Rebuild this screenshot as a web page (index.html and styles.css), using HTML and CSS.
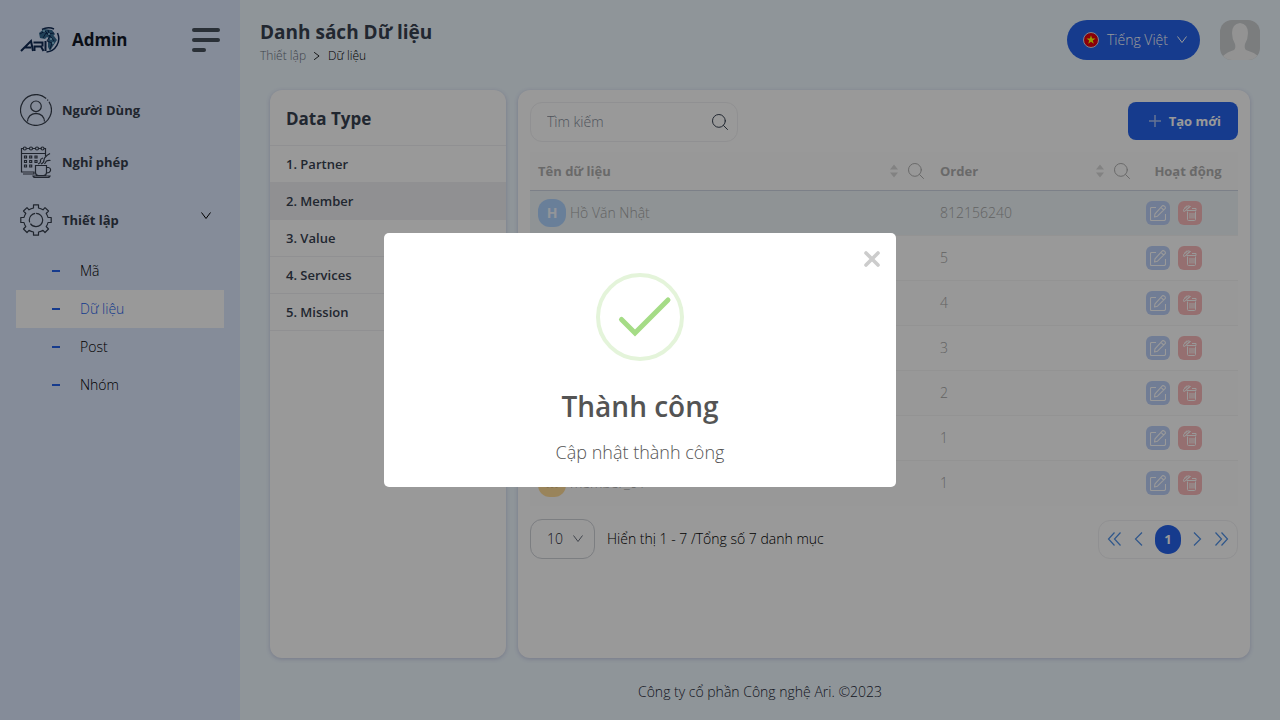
FILE: index.html
```html
<!DOCTYPE html>
<html lang="vi">
<head>
<meta charset="utf-8">
<meta name="viewport" content="width=device-width, initial-scale=1">
<title>Danh sách Dữ liệu</title>
<link rel="stylesheet" href="styles.css">
</head>
<body>
<svg class="defs" aria-hidden="true">
  <symbol id="search" viewBox="0 0 16 16"><g fill="none" stroke="currentColor" stroke-linecap="round"><circle cx="6.9" cy="6.900" r="6.400"/><path d="M11.500 11.500l4 4"/></g></symbol>
  <symbol id="chevron" viewBox="0 0 12 12"><path d="M1.500 2.500L6 8.500l4.500-6" fill="none" stroke="currentColor"/></symbol>
  <symbol id="sort" viewBox="0 0 8 14"><path d="M4 .5L8 5.500H0zM4 13.500L8 8.500H0z" fill="currentColor"/></symbol>
  <symbol id="edit" viewBox="0 0 16 16"><g fill="none" stroke="currentColor" stroke-width="1.100" stroke-linejoin="round"><path d="M6 2.500H1.500Q.5 2.500.5 3.500V14.500Q.5 15.500 1.500 15.500H14Q15.500 15.500 15.500 14V9"/><path d="M12.300.8Q13.500.2 14.700 1.300T15.100 3.700L7.500 11.200 4.500 12 5 8.800zM11 2.300l2.700 2.700"/></g></symbol>
  <symbol id="trash" viewBox="0 0 14 16"><g fill="none" stroke="currentColor" stroke-linejoin="round"><path d="M4.500 6.500v8q0 1 1 1h6q1 0 1-1v-8M3.500 5.500h9.500V3.500H9M7 8v5.500M9 8v5.500M11 8v5.500"/><path d="M.8 6.500L.6 4.500 5 .8 7.500 1.500 1.700 6.300zM1 3.500L4 .8M3 4.700L6.500 1.500"/></g></symbol>
</svg>

<div class="layout">
  <aside class="sidebar">
    <div class="brand">
      <svg class="logo" viewBox="0 0 40 28" aria-hidden="true">
        <g fill="none" stroke="#102a54"><path d="M1 25L11 15 13 25M5 21.500h6" stroke-width="2"/><path d="M14.500 25v-4.500h6.500l2.500 4.500M13.500 16.500h9v4M25.500 15v10" stroke-width="2"/><path d="M22 3.500A13 12 0 0 1 34 3M37.500 7a13.500 13.500 0 0 1-11 19" stroke-width="1.500"/></g>
        <g fill="#35698f"><path d="M19 7l5-4 8 1 3 4-4 5-4-2-2 2-5-1zM28 12l6-2 3 4-4 6-3 5-2-4z"/></g>
        <g fill="none" stroke="#102a54" stroke-width="1"><path d="M20 8l5-3 3 3 6-1M23 12l3-5 5 4 3 4M28 4l2 6-3 5 5 2-2 6"/></g>
        <g fill="#9bd5ed"><circle cx="24" cy="5" r="1"/><circle cx="29" cy="8" r="1"/><circle cx="31" cy="13" r="1"/><circle cx="33" cy="17" r="1"/></g>
      </svg>
      <span class="brand-name">Admin</span>
      <button class="burger" type="button" aria-label="Menu"><i></i><i></i><i></i></button>
    </div>
    <nav class="menu">
      <a class="menu-item" href="#">
        <svg viewBox="0 0 32 32" aria-hidden="true"><g fill="none" stroke="currentColor" stroke-width="1.200"><path d="M29 7.800A15.400 15.400 0 1 1 26.200 4.500M27.300 5.700l.8.8"/><circle cx="16" cy="12.300" r="5.300"/><path d="M7.500 27.500q.5-7.500 8.500-8.200 8 .7 8.500 8.200"/></g></svg>
        Người Dùng</a>
      <a class="menu-item" href="#">
        <svg viewBox="0 0 32 32" aria-hidden="true"><g fill="none" stroke="currentColor" stroke-width="1.200"><path d="M3 2.500H1.500V26h13M25.500 10V2.500H24M1.500 7.500h24M6.500 2.500h3M12.500 2.500h3M18.500 2.500h3M3 28h11v-2"/><circle cx="4.800" cy="2.500" r="1.500"/><circle cx="11" cy="2.500" r="1.500"/><circle cx="17" cy="2.500" r="1.500"/><circle cx="22.500" cy="2.500" r="1.500"/><path d="M4.500 10h2v2h-2zM9.700 10h2v2h-2zM15 10h2v2h-2zM4.500 14.500h2v2h-2zM9.700 14.500h2v2h-2zM15 14.500h2v2h-2zM4.500 19h2v2h-2zM9.700 19h2v2h-2z"/><path d="M15.500 19.500h11v7q0 3-3 3h-5q-3 0-3-3zM26.500 21.500h2q2.500.5 2 3t-4 2.500M13 30h17q-.5 1.500-2 1.500H15Q13.500 31.500 13 30zM18 18q3-1 2.500-3t2.500-3M21 18q3-1 3-4t6-6.500M24.500 18l2-3q2-1 4-.500"/></g></svg>
        Nghỉ phép</a>
      <button class="menu-item menu-parent" type="button" aria-expanded="true">
        <svg viewBox="0 0 32 32" aria-hidden="true"><g fill="none" stroke="currentColor" stroke-width="1.200" stroke-linejoin="round"><path d="M13.500.8h5v3.200q2.500.5 4.500 1.800L25 3.600 28.500 7 26.200 9.500q1.400 2 1.800 4h3.200v5H28q-.4 2-1.800 4l2.300 2.500-3.500 3.500-2-2.200q-2 1.300-4.500 1.700v3.200h-5V28q-2.500-.4-4.500-1.700l-2 2.200L3.500 25l2.300-2.500q-1.400-2-1.800-4H.8v-5H4q.4-2 1.800-4L3.500 7 7 3.600l2 2.200q2-1.300 4.500-1.800z"/><circle cx="16" cy="16" r="6.700" stroke-dasharray="17 1.500 12 1"/></g></svg>
        <span>Thiết lập</span>
        <svg class="menu-arrow" aria-hidden="true"><use href="#chevron"/></svg>
      </button>
      <ul class="submenu">
        <li><a href="#">Mã</a></li>
        <li><a class="active" href="#">Dữ liệu</a></li>
        <li><a href="#">Post</a></li>
        <li><a href="#">Nhóm</a></li>
      </ul>
    </nav>
  </aside>

  <div class="page">
    <header class="topbar">
      <div class="heading">
        <h1>Danh sách Dữ liệu</h1>
        <nav class="crumbs"><a href="#">Thiết lập</a><svg aria-hidden="true"><use href="#chevron"/></svg><span>Dữ liệu</span></nav>
      </div>
      <div class="topbar-tools">
        <button class="language" type="button">
          <svg class="flag" viewBox="0 0 16 16" aria-hidden="true"><circle cx="8" cy="8" r="7.500" fill="#e8000e" stroke="#d8dbe8"/><path d="M8 3.300l1.100 3.200h3.400L9.800 8.500l1 3.300L8 9.800l-2.800 2 1-3.300-2.700-2h3.400z" fill="#ff0"/></svg>
          Tiếng Việt
          <svg class="small-arrow" aria-hidden="true"><use href="#chevron"/></svg>
        </button>
        <svg class="user-photo" viewBox="0 0 40 40" role="img" aria-label="Admin"><rect width="40" height="40" fill="#cdd0d2"/><path d="M3 40V36q4-4 11-6 2-2 1-6-3-5-3-11Q12 4 20 3q8 1 8 10 0 6-3 11-1 4 1 6 7 2 12 6v4z" fill="#f5f5f5"/></svg>
      </div>
    </header>

    <main class="content">
      <section class="card types">
        <h2>Data Type</h2>
        <ul>
          <li><button type="button">1. Partner</button></li>
          <li><button class="selected" type="button">2. Member</button></li>
          <li><button type="button">3. Value</button></li>
          <li><button type="button">4. Services</button></li>
          <li><button type="button">5. Mission</button></li>
        </ul>
      </section>

      <section class="card data">
        <div class="toolbar">
          <label class="search"><input type="text" placeholder="Tìm kiếm" aria-label="Tìm kiếm"><svg class="icon" aria-hidden="true"><use href="#search"/></svg></label>
          <button class="create" type="button"><svg viewBox="0 0 12 12" aria-hidden="true"><path d="M6 0v12M0 6h12" stroke="currentColor" stroke-width="1.500"/></svg>Tạo mới</button>
        </div>
        <table>
          <colgroup><col><col class="col-order"><col class="col-action"></colgroup>
          <thead><tr>
            <th><div class="th">Tên dữ liệu<span class="th-tools"><svg class="sort"><use href="#sort"/></svg><svg class="icon"><use href="#search"/></svg></span></div></th>
            <th><div class="th">Order<span class="th-tools"><svg class="sort"><use href="#sort"/></svg><svg class="icon"><use href="#search"/></svg></span></div></th>
            <th class="center">Hoạt động</th>
          </tr></thead>
          <tbody>
            <tr class="hover"><td><div class="person"><span class="avatar">H</span>Hồ Văn Nhật</div></td><td>812156240</td><td><div class="actions"><button class="edit" type="button" aria-label="Sửa"><svg><use href="#edit"/></svg></button><button class="delete" type="button" aria-label="Xóa"><svg><use href="#trash"/></svg></button></div></td></tr>
            <tr><td></td><td>5</td><td><div class="actions"><button class="edit" type="button" aria-label="Sửa"><svg><use href="#edit"/></svg></button><button class="delete" type="button" aria-label="Xóa"><svg><use href="#trash"/></svg></button></div></td></tr>
            <tr><td></td><td>4</td><td><div class="actions"><button class="edit" type="button" aria-label="Sửa"><svg><use href="#edit"/></svg></button><button class="delete" type="button" aria-label="Xóa"><svg><use href="#trash"/></svg></button></div></td></tr>
            <tr><td></td><td>3</td><td><div class="actions"><button class="edit" type="button" aria-label="Sửa"><svg><use href="#edit"/></svg></button><button class="delete" type="button" aria-label="Xóa"><svg><use href="#trash"/></svg></button></div></td></tr>
            <tr><td></td><td>2</td><td><div class="actions"><button class="edit" type="button" aria-label="Sửa"><svg><use href="#edit"/></svg></button><button class="delete" type="button" aria-label="Xóa"><svg><use href="#trash"/></svg></button></div></td></tr>
            <tr><td></td><td>1</td><td><div class="actions"><button class="edit" type="button" aria-label="Sửa"><svg><use href="#edit"/></svg></button><button class="delete" type="button" aria-label="Xóa"><svg><use href="#trash"/></svg></button></div></td></tr>
            <tr><td><div class="person"><span class="avatar amber">M</span>member_01</div></td><td>1</td><td><div class="actions"><button class="edit" type="button" aria-label="Sửa"><svg><use href="#edit"/></svg></button><button class="delete" type="button" aria-label="Xóa"><svg><use href="#trash"/></svg></button></div></td></tr>
          </tbody>
        </table>
        <div class="table-foot">
          <div class="page-size">
            <span class="select"><select aria-label="Số dòng"><option>10</option></select><svg class="small-arrow" aria-hidden="true"><use href="#chevron"/></svg></span>
            <span>Hiển thị 1 - 7 /Tổng số 7 danh mục</span>
          </div>
          <nav class="pager" aria-label="Trang">
            <button type="button" aria-label="Trang đầu"><svg viewBox="0 0 15 14"><path d="M7.500.5L1.500 7l6 6.500M13.500.5L7.500 7l6 6.500"/></svg></button>
            <button type="button" aria-label="Trang trước"><svg viewBox="0 0 15 14"><path d="M11 .5L4.500 7l6.500 6.500"/></svg></button>
            <button class="current" type="button">1</button>
            <button type="button" aria-label="Trang sau"><svg viewBox="0 0 15 14"><path d="M4 .5L10.500 7 4 13.500"/></svg></button>
            <button type="button" aria-label="Trang cuối"><svg viewBox="0 0 15 14"><path d="M1.500.5l6 6.500-6 6.500M7.500.5l6 6.500-6 6.500"/></svg></button>
          </nav>
        </div>
      </section>
    </main>
    <footer>Công ty cổ phần Công nghệ Ari. ©2023</footer>
  </div>
</div>

<div class="backdrop">
  <div class="modal" role="dialog" aria-modal="true" aria-labelledby="modal-title">
    <button class="close" type="button" aria-label="Đóng"><svg viewBox="0 0 16 16"><path d="M2 2l12 12M14 2L2 14" stroke="currentColor" stroke-width="3.600" stroke-linecap="round"/></svg></button>
    <svg class="success" viewBox="0 0 88 88" aria-hidden="true"><circle cx="44" cy="44" r="42" fill="none" stroke="#e4f4da" stroke-width="4"/><path d="M25.500 46.500L39 60l33-33" fill="none" stroke="#a5dc86" stroke-width="5" stroke-linecap="round"/></svg>
    <h2 id="modal-title">Thành công</h2>
    <p>Cập nhật thành công</p>
  </div>
</div>
</body>
</html>
```
FILE: styles.css
```css
* { box-sizing: border-box; }
body {
  margin: 0;
  font: 300 14px/20px "Open Sans", "Noto Sans", sans-serif;
  color: #111827;
  background: #eef8ff;
}
h1, h2, p, ul { margin: 0; padding: 0; }
ul { list-style: none; }
a { color: inherit; text-decoration: none; }
button, input, select { font: inherit; color: inherit; }
button { border: 0; padding: 0; background: none; }
svg { display: block; flex: none; }
.defs { position: absolute; width: 0; height: 0; }
.icon { width: 16px; height: 16px; }
.small-arrow { width: 12px; height: 12px; }

.layout { display: grid; grid-template-columns: 240px 1fr; min-height: 100vh; }

.sidebar { background: #dee9ff; }
.brand { display: flex; align-items: center; gap: 12px; height: 80px; padding: 0 20px; }
.logo { width: 40px; height: 28px; }
.brand-name { font-size: 17px; font-weight: 700; }
.burger { display: grid; gap: 6px; width: 28px; margin-left: auto; }
.burger i { height: 4px; border-radius: 2px; background: #46515c; }
.burger i:last-child { width: 14px; }
.menu { padding-top: 4px; }
.menu-item {
  display: flex;
  align-items: center;
  gap: 10px;
  width: 100%;
  height: 52px;
  padding: 0 20px;
  color: #363f4d;
  font-size: 13px;
  font-weight: 700;
  text-align: left;
}
.menu-item svg { width: 32px; height: 32px; }
.menu-parent { height: 64px; }
.menu-item .menu-arrow { width: 12px; height: 12px; margin: 0 8px 8px auto; color: #000; }
.submenu { padding: 0 16px; }
.submenu a { display: flex; align-items: center; gap: 20px; height: 38px; padding-left: 36px; color: #000; }
.submenu a::before { content: ""; width: 8px; height: 2px; background: #2563eb; }
.submenu .active { background: #fff; color: #2563eb; }

.page { display: flex; flex-direction: column; min-width: 0; }
.topbar { display: flex; justify-content: space-between; align-items: center; height: 80px; padding: 0 20px; }
.heading { padding-top: 4px; }
h1 { font-size: 19px; line-height: 28px; font-weight: 700; color: #374151; }
.crumbs { display: flex; align-items: center; gap: 6px; font-size: 12px; color: #000; }
.crumbs a { color: #6b7280; }
.crumbs svg { width: 10px; height: 10px; transform: rotate(-90deg); }
.topbar-tools { display: flex; align-items: center; gap: 20px; }
.language {
  display: flex;
  align-items: center;
  gap: 8px;
  height: 40px;
  padding: 0 12px 0 16px;
  border-radius: 20px;
  background: #2563eb;
  color: #fff;
}
.flag { width: 16px; height: 16px; }
.user-photo { width: 40px; height: 40px; border-radius: 12px; }

.content { flex: 1; display: grid; grid-template-columns: repeat(12, 1fr); gap: 12px; padding: 10px 30px 0; }
.card { border-radius: 12px; background: #fff; box-shadow: 0 1px 4px #c5cbe6; }
.types { grid-column: span 3; overflow: hidden; }
.types h2 { padding: 17px 16px 14px; font-size: 17px; line-height: 24px; font-weight: 700; color: #374151; border-bottom: 1px solid #f1f1f3; }
.types li { border-bottom: 1px solid #f1f1f3; }
.types button { width: 100%; height: 36px; padding: 0 16px; text-align: left; font-size: 13px; font-weight: 600; color: #374151; }
.types .selected { background: #f1f1f4; }

.data { grid-column: span 9; min-width: 0; padding: 12px; }
.toolbar { display: flex; justify-content: space-between; align-items: flex-start; height: 50px; }
.search { display: flex; align-items: center; width: 208px; height: 40px; padding: 0 9px 0 16px; border: 1px solid #f1f1f3; border-radius: 12px; }
.search input { flex: 1; min-width: 0; padding: 0; border: 0; outline: 0; background: none; }
.search input::placeholder { color: #858d9a; opacity: 1; }
.search .icon { color: #374151; }
.create { display: flex; align-items: center; gap: 8px; height: 38px; padding: 0 17px 0 21px; border-radius: 8px; background: #2563eb; color: #fff; font-size: 13px; font-weight: 700; }
.create svg { width: 12px; height: 12px; color: #a8c0f5; }

table { width: 100%; border-collapse: separate; border-spacing: 0; table-layout: fixed; color: #a6a6a6; }
.col-order { width: 206px; }
.col-action { width: 100px; }
th { height: 39px; padding: 0 8px; border-bottom: 1px solid #cfd5e3; background: #fdfdfd; text-align: left; font-size: 13px; font-weight: 700; color: #b0b0b0; }
.th { display: flex; justify-content: space-between; align-items: center; }
.th-tools { display: flex; align-items: center; gap: 10px; }
.sort { width: 8px; height: 14px; color: #d9d9d9; }
.center { text-align: center; }
td { height: 45px; padding: 0 8px; border-bottom: 1px solid #f5f5f5; }
tbody tr:nth-child(odd) td { background: #fdfdfd; }
tbody tr.hover td { background: #eef5f9; }
tbody tr:last-child td { border-bottom-color: #fdfdfd; }
.person { display: flex; align-items: center; gap: 4px; }
.avatar { width: 28px; height: 28px; border-radius: 12px; background: #afd4ff; color: #f4f8ff; line-height: 28px; text-align: center; font-weight: 700; }
.avatar.amber { background: #ffdc98; color: #e0bf80; }
.actions { display: flex; gap: 8px; }
.actions button { display: grid; place-items: center; width: 24px; height: 24px; border-radius: 6px; color: #fff; }
.edit { background: #bdd0f8; }
.delete { background: #f8babb; }
.edit svg { width: 16px; height: 16px; }
.delete svg { width: 14px; height: 16px; }

.table-foot { display: flex; justify-content: space-between; align-items: center; padding-top: 13px; color: #000; }
.page-size { display: flex; align-items: center; gap: 12px; }
.select { display: grid; align-items: center; }
.select > * { grid-area: 1 / 1; }
.select select { appearance: none; width: 65px; height: 40px; padding: 0 16px; border: 1px solid #cfd2d8; border-radius: 12px; background: none; color: #1f2937; }
.select svg { justify-self: end; margin-right: 11px; color: #6b7280; }
.pager { display: flex; align-items: center; gap: 9px; height: 39px; padding: 0 8px; border: 1px solid #f1f1f3; border-radius: 12px; }
.pager svg { width: 15px; height: 14px; fill: none; stroke: #4f91e8; stroke-width: 1.2; }
.pager .current { width: 26px; height: 29px; border-radius: 13px; background: #2563eb; color: #fff; font-size: 13px; font-weight: 700; }

footer { display: grid; place-items: center; height: 62px; padding-top: 6px; color: #1f2937; }

.backdrop { position: fixed; inset: 0; display: grid; place-items: center; background: rgba(0, 0, 0, .4); }
.modal { position: relative; display: flex; flex-direction: column; align-items: center; width: 512px; max-width: 100%; padding: 40px 20px 20px; border-radius: 5px; background: #fff; color: #545454; }
.close { position: absolute; top: 18px; right: 16px; color: #ccc; }
.close svg { width: 16px; height: 16px; }
.success { width: 88px; height: 88px; }
.modal h2 { margin-top: 24px; font-size: 28px; line-height: 42px; font-weight: 600; }
.modal p { margin-top: 10px; font-size: 18px; line-height: 30px; }
```
